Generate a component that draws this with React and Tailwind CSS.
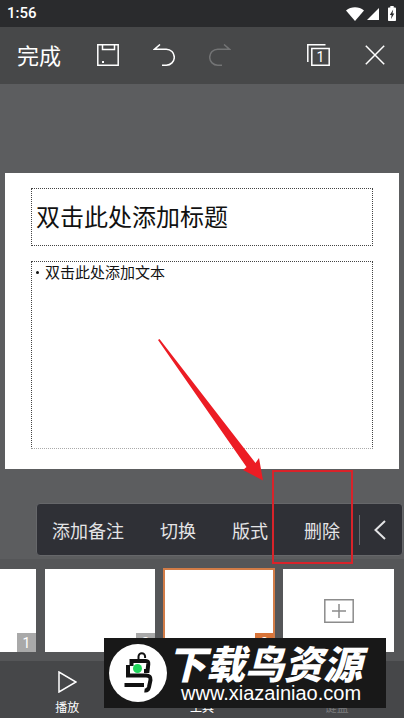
import { useState } from "react";

const MENU = ["添加备注", "切换", "版式", "删除"];

const line = { fill: "none", stroke: "currentColor", strokeWidth: 1.5 };

// STATUS BAR
function StatusBar() {
  return (
    <div className="flex h-[27px] items-center bg-[#2a2b2d] pl-[7px] pr-2 text-white">
      <span className="font-['Roboto',sans-serif] text-[15px] font-medium">1:56</span>
      <svg className="ml-auto" width="18" height="14" viewBox="0 0 18 14" fill="currentColor">
        <path d="M0 3.4C5.2-.8 12.8-.8 18 3.4L9 14Z" />
      </svg>
      <svg className="ml-[3px]" width="12" height="12" viewBox="0 0 12 12" fill="currentColor">
        <path d="M12 0v12H0Z" />
      </svg>
      <svg className="ml-[9px]" width="8" height="15" viewBox="0 0 8 15">
        <path fill="currentColor" d="M2.300 0h3.400v1.600h1.500q.8 0 .8.8v11.800q0 .8-.8.8H.8q-.8 0-.8-.8V2.400q0-.8.8-.8h1.500Z" />
        <path fill="#2a2b2d" d="M5.200 3.500 1.800 9h1.800l-.6 4L6.300 7.500H4.500Z" />
      </svg>
    </div>
  );
}

// TOP TOOLBAR
function Toolbar() {
  return (
    <header className="flex h-[57px] items-center bg-[#474849] pb-0.5 pl-[17px] pr-[19px] text-white">
      <button className="text-[22px]">完成</button>
      <button aria-label="保存" className="ml-9">
        <svg width="22" height="22" viewBox="0 0 22 22" {...line}>
          <path d="M.8.8H21.200V21.200H.8ZM5.500 1V5.500H17.500V1" />
          <path fill="currentColor" stroke="none" d="M5 17h2v2H5z" />
        </svg>
      </button>
      <button aria-label="撤销" className="ml-[34px]">
        <svg width="22" height="22" viewBox="0 0 22 22" {...line}>
          <path d="M7 .5 1.500 5.200H13.300a8 8 0 0 1 0 16H9" />
        </svg>
      </button>
      <button aria-label="重做" className="ml-[34px] text-[#737475]" disabled>
        <svg width="22" height="22" viewBox="0 0 22 22" {...line}>
          <path d="M15 .5 20.500 5.200H8.700a8 8 0 0 0 0 16H13" />
        </svg>
      </button>
      <button aria-label="页面" className="relative ml-auto">
        <svg width="23" height="22" viewBox="0 0 23 22" {...line}>
          <path d="M.8 18V.8H18.500M4.800 4.500H22.200V21.200H4.800Z" />
        </svg>
        <span className="absolute bottom-0 right-0 w-[19px] text-center font-['Roboto',sans-serif] text-sm leading-[18px]">
          1
        </span>
      </button>
      <button aria-label="关闭" className="ml-[35px]">
        <svg width="20" height="20" viewBox="0 0 20 20" {...line}>
          <path d="M.8.8 19.200 19.200M19.200.8.8 19.200" />
        </svg>
      </button>
    </header>
  );
}

function Slide() {
  return (
    <section className="ml-[5px] mr-[5px] bg-white px-[26px] pb-5 pt-[15px] text-[#111]">
      <h1 className="flex h-[58px] items-center border border-dotted border-[#444] pb-[3px] pl-1 text-2xl">
        双击此处添加标题
      </h1>
      <div className="mt-[15px] h-[188px] border border-dotted border-[#444] border-b-[#aaa] pl-1 text-[15px] leading-5">
        <ul>
          <li className="flex items-center gap-1.5">
            <span className="size-[3px] rounded-full bg-[#111]" />
            双击此处添加文本
          </li>
        </ul>
      </div>
    </section>
  );
}

// CONTEXT MENU
function SlideMenu() {
  return (
    <div className="ml-9 mr-px mt-[34px] flex h-[53px] items-center rounded-sm border border-[#66676a] bg-[#2f3036] pl-[15px] pr-4 text-lg text-[#e4e4e6]">
      <div className="flex flex-1 gap-9">
        {MENU.map((m) => (
          <button key={m} className="whitespace-nowrap">
            {m}
          </button>
        ))}
      </div>
      <span className="h-[30px] w-px bg-[#66676c]" />
      <button aria-label="收起" className="ml-3.5">
        <svg width="12" height="20" viewBox="0 0 12 20" fill="none" stroke="currentColor" strokeWidth="2">
          <path d="M11 1 1.500 10 11 19" />
        </svg>
      </button>
    </div>
  );
}

// THUMBNAILS
function Thumbnails() {
  const [current, setCurrent] = useState(3);

  return (
    <div className="flex h-[102px] gap-[9px] overflow-hidden bg-[#555658] pt-[10px]">
      {[1, 2, 3].map((n) => (
        <button
          key={n}
          aria-label={`幻灯片 ${n}`}
          onClick={() => setCurrent(n)}
          className={`flex h-[83px] shrink-0 items-end justify-end bg-white ${
            n === 1 ? "w-9" : "w-[110px]"
          } ${n === current ? "outline-2 -outline-offset-1 outline-[#d27c47]" : ""}`}
        >
          <span
            className={`size-[19px] text-center font-['Roboto',sans-serif] text-sm leading-[21px] text-white ${
              n === current ? "bg-[#d97438]" : "bg-[#a9a9a9]"
            }`}
          >
            {n}
          </span>
        </button>
      ))}
      <button
        aria-label="新建幻灯片"
        className="flex h-[83px] w-[111px] shrink-0 items-center justify-center bg-white text-[#8c8c8c]"
      >
        <svg width="30" height="24" viewBox="0 0 30 24" {...line}>
          <path d="M.8.8H29.200V23.200H.8ZM8 12H22M15 5V19" />
        </svg>
      </button>
    </div>
  );
}

function BottomBar() {
  return (
    <nav className="grid h-[57px] grid-cols-3 bg-[#464749] text-xs text-white">
      <button className="flex flex-col items-center pt-[10px]">
        <svg width="19" height="22" viewBox="0 0 19 22" {...line}>
          <path d="M1 1V21L18 11Z" />
        </svg>
        <span className="mt-[5px] leading-[18px]">播放</span>
      </button>
      <button className="flex flex-col items-center pt-[10px]">
        <svg width="22" height="22" viewBox="0 0 22 22" {...line}>
          <path d="M2 2H9V9H2ZM13 2H20V9H13ZM2 13H9V20H2ZM13 13H20V20H13Z" />
        </svg>
        <span className="mt-[5px] leading-[18px]">工具</span>
      </button>
      <button className="flex flex-col items-center pt-[10px] text-[#7b7c7e]" disabled>
        <svg width="22" height="22" viewBox="0 0 22 22" {...line}>
          <path d="M1 5H21V18H1ZM6 14H16" />
        </svg>
        <span className="mt-[5px] leading-[18px]">键盘</span>
      </button>
    </nav>
  );
}

// SITE BADGE
function SiteBadge() {
  return (
    <div className="absolute bottom-[10px] right-[18px] flex h-[70px] w-[282px] items-center bg-[#181818] pl-[5px] text-white">
      <svg className="shrink-0" width="58" height="58" viewBox="0 0 58 58" fill="none">
        <circle cx="29" cy="29" r="29" fill="#fff" />
        <g stroke="#111" strokeWidth="4">
          <path strokeWidth="2" d="M29.500 15V12.500a3.300 3.300 0 0 1 6.600 0V14" />
          <path d="M22.500 22V17H37Q39.500 17 39.300 20L38.500 27H35M19 21V31.500H37Q42 31.500 41.500 36L40 43Q39 47 35.500 46.500M15.500 41H35" />
        </g>
        <circle cx="28.500" cy="24.500" r="4.500" fill="#1fd65b" />
      </svg>
      <div className="flex flex-1 flex-col gap-1 pt-0.5">
        <span className="whitespace-nowrap text-[39px] font-black italic leading-[34px]">下载鸟资源</span>
        <span className="pl-3.5 font-['Liberation_Sans',sans-serif] text-xl leading-5">www.xiazainiao.com</span>
      </div>
    </div>
  );
}

export default function App() {
  return (
    <div className="relative flex min-h-screen flex-col overflow-hidden bg-[#5c5d5f] font-['Noto_Sans_CJK_SC',sans-serif]">
      <StatusBar />
      <Toolbar />

      <main className="flex-1 pb-[3px] pt-[89px]">
        <Slide />
        <SlideMenu />
      </main>

      <Thumbnails />
      <BottomBar />

      {/* arrow + box pointing at the delete button */}
      <svg className="pointer-events-none absolute left-[158px] top-[339px]" width="105" height="142" viewBox="0 0 105 142" fill="#ec1c24">
        <path d="M0 1 1.500 0 97.500 124 101 119 105 141.500 85 131 88.500 128Z" />
      </svg>
      <div className="pointer-events-none absolute left-[272px] top-[470px] h-[94px] w-[81px] border-2 border-[#d8232a]" />

      <SiteBadge />
    </div>
  );
}
